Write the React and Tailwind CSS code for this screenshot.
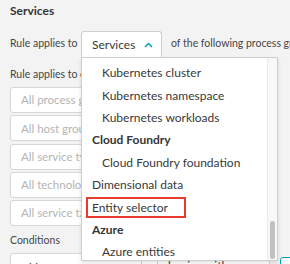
import { useState } from "react";

const OPTIONS = [
  { label: "Kubernetes cluster", indent: true },
  { label: "Kubernetes namespace", indent: true },
  { label: "Kubernetes workloads", indent: true },
  { label: "Cloud Foundry", group: true },
  { label: "Cloud Foundry foundation", indent: true },
  { label: "Dimensional data" },
  { label: "Entity selector", marked: true },
  { label: "Azure", group: true },
  { label: "Azure entities", indent: true },
];

const FILTERS = [
  "All process groups",
  "All host groups",
  "All service types",
  "All technologies",
  "All service tags",
];

export default function App() {
  const [open] = useState(true);

  return (
    <div className="relative h-[264px] w-[290px] overflow-hidden bg-[#f3f3f3] font-['Lato',sans-serif] text-[#454646]">
      <div className="px-[10px] pt-[3px]">
        <h2 className="text-[12px] font-bold leading-[16px] text-[#353535]">Services</h2>

        <div className="mt-[12px] flex items-center whitespace-nowrap text-[10.5px]">
          <span className="w-[71px] shrink-0">Rule applies to</span>
          <div className="relative shrink-0">
            <button
              type="button"
              className="flex h-[26px] w-[81px] items-center rounded-t-[3px] border border-b-0 border-[#cfcfcf] bg-white pl-[10px] text-[12px] text-[#393939]"
            >
              Services
              <ChevronUp />
            </button>
            {open && <Dropdown />}
          </div>
          <span className="ml-[9px] shrink-0">of the following process groups</span>
        </div>

        <p className="mt-[9px] whitespace-nowrap text-[10.5px] leading-[16px]">
          Rule applies to entities with the following properties
        </p>

        <div className="mt-[5px] flex flex-col gap-[2.25px]">
          {FILTERS.map((f) => (
            <div
              key={f}
              className="flex h-[26px] w-[200px] items-center rounded-[3px] border border-[#d6d6d6] bg-white pl-[10px] text-[11.5px] text-[#b4b4b4]"
            >
              {f}
            </div>
          ))}
        </div>

        <p className="mt-[6px] text-[10.5px] leading-[16px]">Conditions</p>

        <div className="mt-[5px] flex items-start">
          <div className="flex h-[26px] w-[148px] shrink-0 rounded-[3px] border border-[#d6d6d6] bg-white text-[12px] text-[#393939]">
            <span className="flex-1 whitespace-nowrap pl-[10px] pt-[5px]">Akka actor system</span>
            <span className="w-[16px] border-l border-[#d6d6d6]" />
          </div>
          <div className="flex h-[26px] w-[112px] shrink-0 items-center whitespace-nowrap border border-l-0 border-[#d6d6d6] bg-white pl-[10px] text-[12px] text-[#393939]">
            begins with
          </div>
          <div className="ml-[10px] mt-[4px] h-[26px] w-[40px] shrink-0 rounded-[3px] border border-[#00a1b2] bg-white" />
        </div>
      </div>
    </div>
  );
}

function ChevronUp() {
  return (
    <svg width="9" height="6" viewBox="0 0 9 6" className="ml-[9px]">
      <path d="M1 5L4.5 1.5L8 5" fill="none" stroke="#00a1b2" strokeWidth="1.5" />
    </svg>
  );
}

function Dropdown() {
  return (
    <div className="absolute left-0 top-[26px] z-10 flex h-[204px] w-[197px] border border-[#cfcfcf] bg-white shadow-[0_2px_4px_rgba(0,0,0,0.12)]">
      <ul className="flex-1 pt-[4px] text-[12px] text-[#393939]">
        {OPTIONS.map((o) => (
          <li
            key={o.label}
            className={`flex h-[22.4px] items-center whitespace-nowrap ${
              o.indent ? "pl-[20px]" : "pl-[10px]"
            } ${o.group ? "font-bold text-[#353535]" : ""}`}
          >
            {o.marked ? (
              <span className="-ml-[6px] flex h-[21px] w-[100px] items-center border-2 border-[#e8392e] pl-[4px]">
                {o.label}
              </span>
            ) : (
              o.label
            )}
          </li>
        ))}
      </ul>
      <div className="flex w-[10px] flex-col justify-end border-l border-[#ececec] bg-[#f8f8f8] pb-[1px] pl-[2px]">
        <div className="h-[38px] w-[5px] rounded-[3px] bg-[#c1c1c1]" />
      </div>
    </div>
  );
}
